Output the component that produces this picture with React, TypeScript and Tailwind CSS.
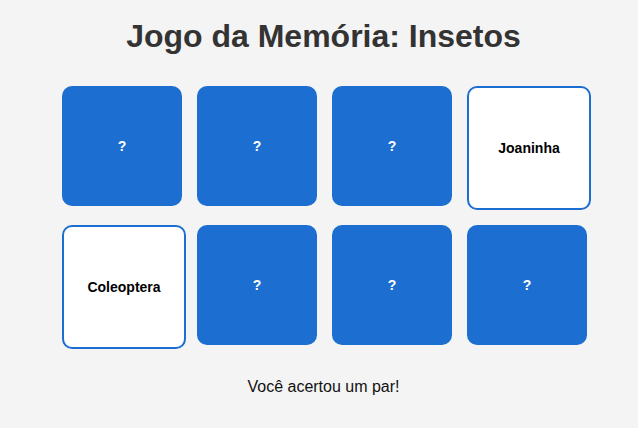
const cards = [
  { label: "Joaninha", open: false },
  { label: "Besouro", open: false },
  { label: "Inseto", open: false },
  { label: "Joaninha", open: true },
  { label: "Coleoptera", open: true },
  { label: "Formiga", open: false },
  { label: "Hymenoptera", open: false },
  { label: "Besouro", open: false },
];

export default function App() {
  return (
    <div className="min-h-[428px] bg-[#f4f4f4] font-['Liberation_Sans',Arial,sans-serif] pt-[12px] pl-[9px]">
      <h1 className="text-center text-[32px] font-bold leading-normal text-[#333]">
        Jogo da Memória: Insetos
      </h1>
      <div className="mt-[26px] pl-[53px] grid grid-cols-[repeat(4,120px)] gap-[15px] items-start">
        {cards.map((card, i) =>
          card.open ? (
            <div
              key={i}
              className="box-content w-[120px] h-[120px] rounded-[10px] border-2 border-[#1c6fd1] bg-white flex items-center justify-center text-[14px] font-bold text-black"
            >
              {card.label}
            </div>
          ) : (
            <div
              key={i}
              className="w-[120px] h-[120px] rounded-[10px] bg-[#1c6fd1] flex items-center justify-center text-[14px] font-bold text-white"
            >
              ?
            </div>
          )
        )}
      </div>
      <p className="mt-[26px] text-center text-[16px] leading-normal text-[#111]">
        Você acertou um par!
      </p>
    </div>
  );
}
